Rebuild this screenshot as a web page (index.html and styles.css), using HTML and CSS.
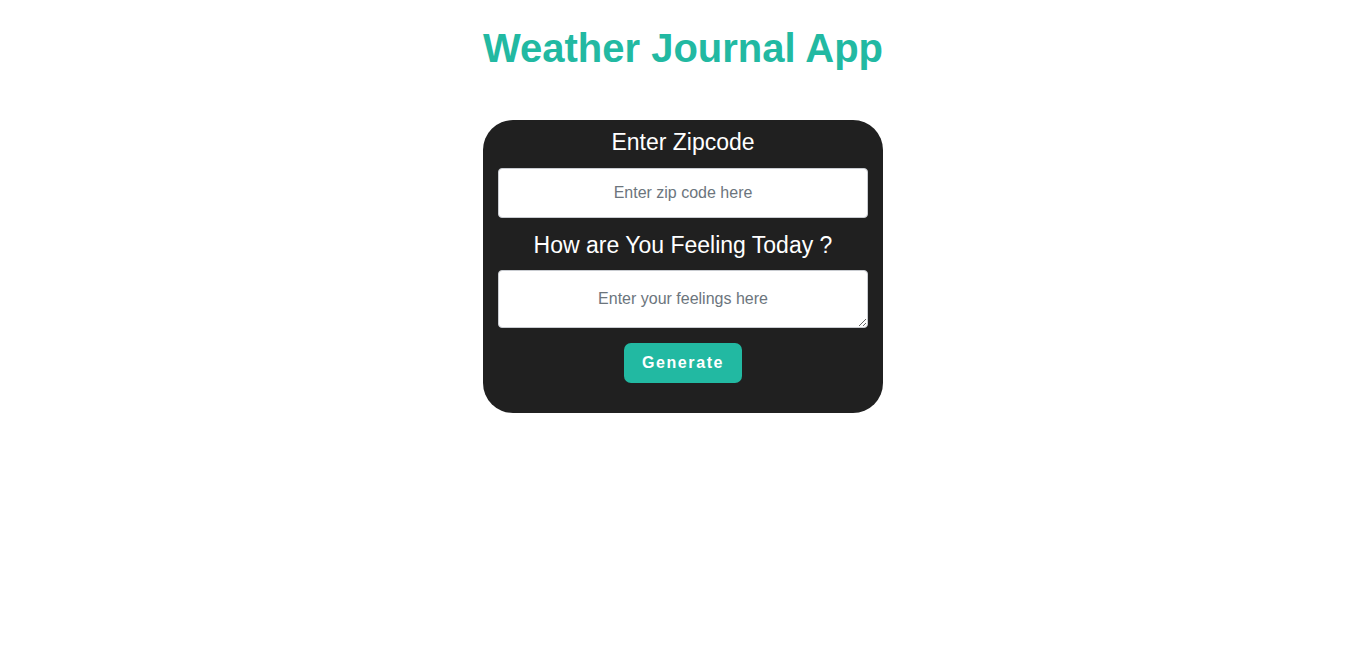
FILE: index.html
```html
<!DOCTYPE html>
<html>
<head>
<meta charset="utf-8">
<title>Weather Journal App</title>
<link rel="stylesheet" href="styles.css">
</head>
<body>
<main class="app">
  <h1 class="title">Weather Journal App</h1>
  <form class="card">
    <label class="label" for="zip">Enter Zipcode</label>
    <input class="field" id="zip" type="text" placeholder="Enter zip code here">
    <label class="label label-second" for="feelings">How are You Feeling Today ?</label>
    <textarea class="field area" id="feelings" placeholder="Enter your feelings here"></textarea>
    <button class="btn" type="button">Generate</button>
  </form>
</main>
</body>
</html>
```

FILE: styles.css
```css
* { box-sizing: border-box; }
body {
  margin: 0;
  background: #ffffff;
  font-family: "Liberation Sans", Arial, sans-serif;
}
.app {
  display: flex;
  flex-direction: column;
  align-items: center;
}
.title {
  margin: 25px 0 49px;
  font-size: 40px;
  line-height: 46px;
  font-weight: 700;
  color: #22b9a2;
}
.card {
  width: 400px;
  background: #202020;
  border-radius: 30px;
  padding: 8px 15px 30px;
  display: flex;
  flex-direction: column;
  align-items: center;
}
.label {
  color: #ffffff;
  font-size: 23px;
  line-height: 28px;
  margin-bottom: 12px;
}
.label-second {
  margin-top: 13px;
  margin-bottom: 11px;
}
.field {
  width: 100%;
  height: 50px;
  border: 1px solid #c9ccd1;
  border-radius: 4px;
  background: #ffffff;
  font-family: "Liberation Sans", Arial, sans-serif;
  font-size: 16px;
  text-align: center;
  color: #333;
  outline: none;
}
.field::placeholder { color: #6c757d; }
.area {
  height: 58px;
  padding: 19px 10px 0;
  resize: vertical;
  display: block;
}
.btn {
  margin-top: 15px;
  width: 118px;
  height: 40px;
  border: none;
  border-radius: 7px;
  background: #22b9a2;
  color: #ffffff;
  font-family: "Liberation Sans", Arial, sans-serif;
  font-size: 16px;
  font-weight: 700;
  letter-spacing: 1.6px;
  cursor: pointer;
}
```
